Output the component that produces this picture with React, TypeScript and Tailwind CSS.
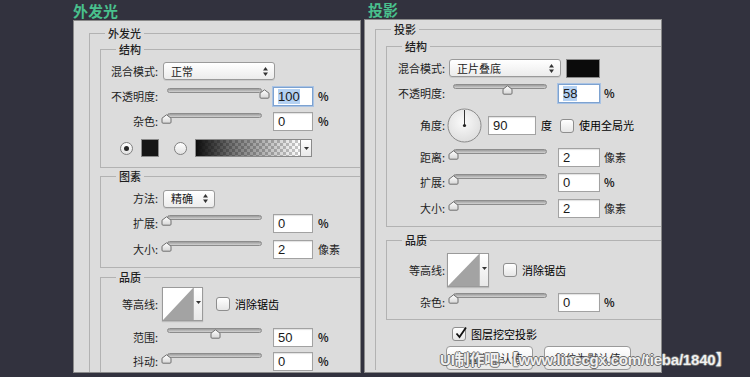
import React from "react";

const cjk = "font-['Noto_Sans_CJK_SC','Liberation_Sans',sans-serif]";
const num = "font-['Liberation_Sans','Noto_Sans_CJK_SC',sans-serif]";

const Arrows = () => (
  <svg width="5" height="9" viewBox="0 0 5 9">
    <path d="M0 3.5 L2.5 0 L5 3.5Z M0 5.5 L2.5 9 L5 5.5Z" fill="#333" />
  </svg>
);

const Caret = () => (
  <svg width="5" height="3" viewBox="0 0 5 3">
    <path d="M0 0 H5 L2.5 3Z" fill="#333" />
  </svg>
);

const Select = ({ text, width }: { text: string; width: string }) => (
  <div
    className={`${width} h-[18px] rounded-[3px] border border-[#9a9a9a] bg-gradient-to-b from-white to-[#ececec] shadow-[0_1px_0_rgba(0,0,0,0.08)] flex items-center justify-between pl-[7px] pr-[6px] shrink-0`}
  >
    <span className="text-[11px] leading-none text-[#222]">{text}</span>
    <Arrows />
  </div>
);

const Field = ({ value, width, focus }: { value: string; width: string; focus?: boolean }) => (
  <div
    className={`${width} h-[19px] shrink-0 bg-white flex items-center pl-[4px] ${num} text-[13px] text-[#1a1a1a] ${
      focus
        ? "border border-[#7da2d0] shadow-[0_0_0_1px_#a9c3e4]"
        : "border border-[#a2a2a2] shadow-[inset_0_1px_1px_rgba(0,0,0,0.12)]"
    }`}
  >
    <span className={focus ? "bg-[#b4d1f2] leading-[15px]" : "leading-[15px]"}>{value}</span>
  </div>
);

const Thumb = () => (
  <svg width="11" height="10" viewBox="0 0 11 10">
    <defs>
      <linearGradient id="tg" x1="0" y1="0" x2="0" y2="1">
        <stop offset="0" stopColor="#ffffff" />
        <stop offset="1" stopColor="#d6d6d6" />
      </linearGradient>
    </defs>
    <path d="M1 4.2 L5.5 0.8 L10 4.2 V8.2 Q10 9.2 9 9.2 H2 Q1 9.2 1 8.2Z" fill="url(#tg)" stroke="#6f6f6f" strokeWidth="1" />
  </svg>
);

// slider: box width + track, thumb placed by value
const Slider = ({ pct, box, track, range }: { pct: number; box: string; track: string; range: number }) => (
  <div className={`relative ${box} h-[19px] shrink-0`}>
    <div className={`${track} mt-[1px] h-[5px] rounded-full border border-[#8c8c8c] bg-gradient-to-b from-[#9c9c9c] to-[#d2d2d2]`} />
    <div className="absolute top-[1px]" style={{ left: Math.round((pct / 100) * range) }}>
      <Thumb />
    </div>
  </div>
);

const Check = ({ on }: { on?: boolean }) => (
  <div className="relative w-[14px] h-[14px] shrink-0 rounded-[3px] border border-[#8e8e8e] bg-gradient-to-b from-white to-[#e6e6e6]">
    {on && (
      <svg className="absolute left-[1px] top-[-2px]" width="14" height="14" viewBox="0 0 14 14">
        <path d="M2.5 7.5 L5.5 11 L12 1.5" fill="none" stroke="#111" strokeWidth="1.8" />
      </svg>
    )}
  </div>
);

const Radio = ({ on }: { on?: boolean }) => (
  <div className="w-[13px] h-[13px] shrink-0 rounded-full border border-[#808080] bg-gradient-to-b from-white to-[#e2e2e2] flex items-center justify-center">
    {on && <div className="w-[5px] h-[5px] rounded-full bg-[#262626]" />}
  </div>
);

const Contour = ({ width }: { width: string }) => (
  <div className={`${width} h-[34px] shrink-0 flex border border-[#9a9a9a] bg-white shadow-[0_1px_1px_rgba(0,0,0,0.15)]`}>
    <svg className="flex-1 h-full" viewBox="0 0 32 32" preserveAspectRatio="none">
      <path d="M0 32 L32 0 V32Z" fill="#a3a3a3" />
    </svg>
    <div className="w-[9px] border-l border-[#b5b5b5] bg-gradient-to-b from-white to-[#e8e8e8] flex items-start justify-center pt-[13px]">
      <Caret />
    </div>
  </div>
);

const Dial = () => (
  <svg width="35" height="35" viewBox="0 0 35 35" className="shrink-0">
    <defs>
      <radialGradient id="dg" cx="0.45" cy="0.4" r="0.65">
        <stop offset="0" stopColor="#fafafa" />
        <stop offset="1" stopColor="#dcdcdc" />
      </radialGradient>
    </defs>
    <circle cx="17.5" cy="17.5" r="16.5" fill="url(#dg)" stroke="#8a8a8a" />
    <line x1="17.5" y1="17.5" x2="17.5" y2="2" stroke="#333" strokeWidth="1" />
    <circle cx="17.5" cy="17.5" r="1.6" fill="#222" />
  </svg>
);

const Group = ({
  title,
  className,
  children,
}: {
  title: string;
  className: string;
  children: React.ReactNode;
}) => (
  <fieldset className={`border border-r-0 border-[#b2b2b2] min-w-0 ${className}`}>
    <legend className="ml-[15px] px-[3px] text-[11px] leading-[14px] font-medium text-[#1e1e1e]">{title}</legend>
    {children}
  </fieldset>
);

const Label = ({ text, width }: { text: string; width: string }) => (
  <div className={`${width} shrink-0 text-right text-[11px] leading-none text-[#1e1e1e]`}>{text}</div>
);

const Unit = ({ text, ml }: { text: string; ml: string }) => (
  <span className={`${ml} text-[11px] leading-none text-[#1e1e1e] ${text === "%" ? "font-bold" : ""}`}>{text}</span>
);

const OuterGlow = () => (
  <div className={`h-[353px] border border-[#8a8a8a] bg-[#dcdcdc] overflow-hidden ${cjk}`}>
    <Group title="外发光" className="mt-[5px] ml-[15px] border-b-0">
      <Group title="结构" className="mt-[2px] ml-[10px] pb-[10px]">
        <div className="mt-[6px] h-[18px] flex items-center">
          <Label text="混合模式:" width="w-[57px]" />
          <div className="ml-[5px]">
            <Select text="正常" width="w-[112px]" />
          </div>
        </div>
        <div className="mt-[7px] h-[19px] flex items-center">
          <Label text="不透明度:" width="w-[57px]" />
          <div className="ml-[3px] self-start">
            <Slider pct={100} box="w-[110px]" track="ml-[6px] w-[95px]" range={98} />
          </div>
          <div className="ml-[2px]">
            <Field value="100" width="w-[40px]" focus />
          </div>
          <Unit text="%" ml="ml-[5px]" />
        </div>
        <div className="mt-[6px] h-[19px] flex items-center">
          <Label text="杂色:" width="w-[57px]" />
          <div className="ml-[3px] self-start">
            <Slider pct={0} box="w-[110px]" track="ml-[6px] w-[95px]" range={98} />
          </div>
          <div className="ml-[2px]">
            <Field value="0" width="w-[40px]" />
          </div>
          <Unit text="%" ml="ml-[5px]" />
        </div>
        <div className="mt-[8px] h-[18px] flex items-center">
          <div className="ml-[19px]">
            <Radio on />
          </div>
          <div className="ml-[8px] w-[18px] h-[18px] border border-[#8a8a8a] bg-[#151515]" />
          <div className="ml-[15px]">
            <Radio />
          </div>
          <div className="ml-[8px] w-[106px] h-[18px] border border-[#8a8a8a] [background:linear-gradient(to_right,#0d0d0d,rgba(0,0,0,0.55)_35%,rgba(0,0,0,0)),repeating-conic-gradient(#c9c9c9_0_25%,#ffffff_0_50%)_0_0/6px_6px]" />
          <div className="w-[11px] h-[18px] border border-l-0 border-[#8a8a8a] bg-gradient-to-b from-white to-[#e8e8e8] flex items-center justify-center">
            <Caret />
          </div>
        </div>
      </Group>
      <Group title="图素" className="mt-[1px] ml-[10px] pb-[8px]">
        <div className="mt-[6px] h-[19px] flex items-center">
          <Label text="方法:" width="w-[57px]" />
          <div className="ml-[5px]">
            <Select text="精确" width="w-[52px]" />
          </div>
        </div>
        <div className="mt-[6px] h-[19px] flex items-center">
          <Label text="扩展:" width="w-[57px]" />
          <div className="ml-[3px] self-start">
            <Slider pct={0} box="w-[110px]" track="ml-[6px] w-[95px]" range={98} />
          </div>
          <div className="ml-[2px]">
            <Field value="0" width="w-[40px]" />
          </div>
          <Unit text="%" ml="ml-[5px]" />
        </div>
        <div className="mt-[7px] h-[19px] flex items-center">
          <Label text="大小:" width="w-[57px]" />
          <div className="ml-[3px] self-start">
            <Slider pct={0} box="w-[110px]" track="ml-[6px] w-[95px]" range={98} />
          </div>
          <div className="ml-[2px]">
            <Field value="2" width="w-[40px]" />
          </div>
          <Unit text="像素" ml="ml-[5px]" />
        </div>
      </Group>
      <Group title="品质" className="mt-[2px] ml-[10px] pb-[10px]">
        <div className="mt-[3px] h-[34px] flex items-center">
          <Label text="等高线:" width="w-[57px]" />
          <div className="ml-[4px]">
            <Contour width="w-[41px]" />
          </div>
          <div className="ml-[13px]">
            <Check />
          </div>
          <span className="ml-[5px] text-[11px] leading-none">消除锯齿</span>
        </div>
        <div className="mt-[6px] h-[20px] flex items-center">
          <Label text="范围:" width="w-[57px]" />
          <div className="ml-[3px] self-start">
            <Slider pct={50} box="w-[110px]" track="ml-[6px] w-[95px]" range={98} />
          </div>
          <div className="ml-[2px]">
            <Field value="50" width="w-[40px]" />
          </div>
          <Unit text="%" ml="ml-[5px]" />
        </div>
        <div className="mt-[5px] h-[19px] flex items-center">
          <Label text="抖动:" width="w-[57px]" />
          <div className="ml-[3px] self-start">
            <Slider pct={0} box="w-[110px]" track="ml-[6px] w-[95px]" range={98} />
          </div>
          <div className="ml-[2px]">
            <Field value="0" width="w-[40px]" />
          </div>
          <Unit text="%" ml="ml-[5px]" />
        </div>
      </Group>
    </Group>
  </div>
);

const DropShadow = () => (
  <div className={`h-[354px] border border-[#8a8a8a] bg-[#dcdcdc] overflow-hidden ${cjk}`}>
    <Group title="投影" className="mt-[2px] ml-[10px] border-b-0">
      <Group title="结构" className="mt-[3px] ml-[10px] pb-[8px]">
        <div className="mt-[6px] h-[18px] flex items-center">
          <Label text="混合模式:" width="w-[58px]" />
          <div className="ml-[4px]">
            <Select text="正片叠底" width="w-[112px]" />
          </div>
          <div className="ml-[5px] w-[34px] h-[19px] border border-[#8a8a8a] bg-[#0b0b0b]" />
        </div>
        <div className="mt-[6px] h-[20px] flex items-center">
          <Label text="不透明度:" width="w-[58px]" />
          <div className="ml-[3px] self-start">
            <Slider pct={58} box="w-[104px]" track="ml-[5px] w-[94px]" range={93} />
          </div>
          <div className="ml-[6px]">
            <Field value="58" width="w-[42px]" focus />
          </div>
          <Unit text="%" ml="ml-[4px]" />
        </div>
        <div className="mt-[5px] h-[35px] flex items-center">
          <Label text="角度:" width="w-[58px]" />
          <div className="ml-[2px]">
            <Dial />
          </div>
          <div className="ml-[6px]">
            <Field value="90" width="w-[48px]" />
          </div>
          <span className="ml-[5px] text-[11px] leading-none">度</span>
          <div className="ml-[8px]">
            <Check />
          </div>
          <span className="ml-[5px] text-[11px] leading-none">使用全局光</span>
        </div>
        <div className="mt-[5px] h-[19px] flex items-center">
          <Label text="距离:" width="w-[58px]" />
          <div className="ml-[3px] self-start">
            <Slider pct={0} box="w-[104px]" track="ml-[5px] w-[94px]" range={93} />
          </div>
          <div className="ml-[6px]">
            <Field value="2" width="w-[42px]" />
          </div>
          <Unit text="像素" ml="ml-[4px]" />
        </div>
        <div className="mt-[6px] h-[19px] flex items-center">
          <Label text="扩展:" width="w-[58px]" />
          <div className="ml-[3px] self-start">
            <Slider pct={0} box="w-[104px]" track="ml-[5px] w-[94px]" range={93} />
          </div>
          <div className="ml-[6px]">
            <Field value="0" width="w-[42px]" />
          </div>
          <Unit text="%" ml="ml-[4px]" />
        </div>
        <div className="mt-[7px] h-[19px] flex items-center">
          <Label text="大小:" width="w-[58px]" />
          <div className="ml-[3px] self-start">
            <Slider pct={0} box="w-[104px]" track="ml-[5px] w-[94px]" range={93} />
          </div>
          <div className="ml-[6px]">
            <Field value="2" width="w-[42px]" />
          </div>
          <Unit text="像素" ml="ml-[4px]" />
        </div>
      </Group>
      <Group title="品质" className="mt-[6px] ml-[10px] pb-[7px]">
        <div className="mt-[6px] h-[34px] flex items-center">
          <Label text="等高线:" width="w-[58px]" />
          <div className="ml-[2px]">
            <Contour width="w-[42px]" />
          </div>
          <div className="ml-[14px]">
            <Check />
          </div>
          <span className="ml-[5px] text-[11px] leading-none">消除锯齿</span>
        </div>
        <div className="mt-[5px] h-[20px] flex items-center">
          <Label text="杂色:" width="w-[58px]" />
          <div className="ml-[3px] self-start">
            <Slider pct={0} box="w-[104px]" track="ml-[5px] w-[94px]" range={93} />
          </div>
          <div className="ml-[6px]">
            <Field value="0" width="w-[42px]" />
          </div>
          <Unit text="%" ml="ml-[4px]" />
        </div>
      </Group>
      <div className="mt-[7px] ml-[76px] h-[14px] flex items-center">
        <Check on />
        <span className="ml-[5px] text-[11px] leading-none">图层挖空投影</span>
      </div>
      <div className="mt-[5px] ml-[70px] flex gap-[11px]">
        {["设置为默认值", "复位为默认值"].map((t) => (
          <button
            key={t}
            className="w-[87px] h-[24px] rounded-[4px] border border-[#9a9a9a] bg-gradient-to-b from-white to-[#e9e9e9] text-[11px] text-[#1e1e1e]"
          >
            {t}
          </button>
        ))}
      </div>
    </Group>
  </div>
);

export default function App() {
  return (
    <div className="relative w-[750px] h-[377px] bg-[#32323e] flex pl-[73px] overflow-hidden">
      <div className="w-[288px] shrink-0 flex flex-col">
        <div className={`h-[20px] pt-[1px] text-[15px] leading-[19px] font-bold text-[#49c08d] ${cjk}`}>外发光</div>
        <OuterGlow />
      </div>
      <div className="ml-[3px] w-[298px] shrink-0 flex flex-col">
        <div className={`h-[19px] pl-[4px] pt-[1px] text-[15px] leading-[18px] font-bold text-[#49c08d] ${cjk}`}>投影</div>
        <DropShadow />
      </div>
      <div
        className={`absolute left-[440px] top-[351px] text-[15px] leading-[18px] font-bold text-white/90 tracking-[-0.2px] ${num} [text-shadow:1px_0_0_#6e6e6e,-1px_0_0_#6e6e6e,0_1px_0_#6e6e6e,0_-1px_0_#6e6e6e]`}
      >
        UI制作吧-【www.linecgx.com/tieba/1840】
      </div>
    </div>
  );
}
